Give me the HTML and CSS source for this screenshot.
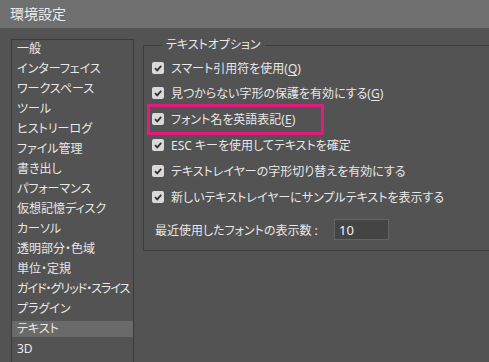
FILE: index.html
```html
<!DOCTYPE html>
<html lang="ja">
<head>
    <meta charset="UTF-8">
    <meta name="viewport" content="width=device-width, initial-scale=1.0">
    <title>環境設定</title>

    <link rel="stylesheet" href="styles.css">
</head>
<body>
    <header class="titulo">環境設定</header>

    <div class="contenido">
        <ul class="lista">
            <li>一般</li>
            <li>インターフェイス</li>
            <li>ワークスペース</li>
            <li>ツール</li>
            <li>ヒストリーログ</li>
            <li>ファイル管理</li>
            <li>書き出し</li>
            <li>パフォーマンス</li>
            <li>仮想記憶ディスク</li>
            <li>カーソル</li>
            <li>透明部分・色域</li>
            <li>単位・定規</li>
            <li class="apretado">ガイド・グリッド・スライス</li>
            <li>プラグイン</li>
            <li class="activo">テキスト</li>
            <li>3D</li>
        </ul>

        <fieldset class="opciones">
            <legend>テキストオプション</legend>

            <div class="fila primera">
                <span class="check"><svg viewBox="0 0 12 12"><polyline points="3,6.2 5.2,8.4 9.2,3.8"/></svg></span>
                <span>スマート引用符を使用(<u>Q</u>)</span>
            </div>
            <div class="fila">
                <span class="check"><svg viewBox="0 0 12 12"><polyline points="3,6.2 5.2,8.4 9.2,3.8"/></svg></span>
                <span>見つからない字形の保護を有効にする(<u>G</u>)</span>
            </div>
            <div class="fila marcada">
                <span class="check"><svg viewBox="0 0 12 12"><polyline points="3,6.2 5.2,8.4 9.2,3.8"/></svg></span>
                <span>フォント名を英語表記(<u>E</u>)</span>
                <span class="resalte"></span>
            </div>
            <div class="fila">
                <span class="check"><svg viewBox="0 0 12 12"><polyline points="3,6.2 5.2,8.4 9.2,3.8"/></svg></span>
                <span>ESC キーを使用してテキストを確定</span>
            </div>
            <div class="fila">
                <span class="check"><svg viewBox="0 0 12 12"><polyline points="3,6.2 5.2,8.4 9.2,3.8"/></svg></span>
                <span>テキストレイヤーの字形切り替えを有効にする</span>
            </div>
            <div class="fila">
                <span class="check"><svg viewBox="0 0 12 12"><polyline points="3,6.2 5.2,8.4 9.2,3.8"/></svg></span>
                <span>新しいテキストレイヤーにサンプルテキストを表示する</span>
            </div>

            <div class="recientes">
                <span class="etiqueta">最近使用したフォントの表示数 :</span>
                <input type="text" value="10">
            </div>
        </fieldset>
    </div>
</body>
</html>
```

FILE: styles.css
```css
body {
    margin: 0;
    font-family: "Noto Sans", "Noto Sans CJK JP", sans-serif;
    font-feature-settings: "palt";
    background-color: #535353;
    color: #e8e8e8;
    overflow: hidden;
    height: 362px;
}

.titulo {
    height: 28px;
    line-height: 28px;
    padding-left: 10px;
    background-color: #6f6f6f;
    color: #ececec;
    font-size: 14px;
}

.contenido {
    display: flex;
    align-items: flex-start;
    gap: 9px;
    padding-left: 11px;
}

.lista {
    list-style: none;
    margin: 11px 0 0 0;
    padding: 1px 0 0 0;
    width: 121px;
    height: 360px;
    border: 1px solid #3b3b3b;
    font-size: 12px;
}

.lista li {
    height: 16px;
    line-height: 16px;
    margin-bottom: 4px;
    padding-left: 5px;
    white-space: nowrap;
}

.lista li.apretado {
    letter-spacing: -1px;
}

.lista li.activo {
    background-color: #6a6a6a;
}

.opciones {
    flex: 1;
    margin: 8px -30px 0 0;
    padding: 0 0 10px 8px;
    border: 1px solid #3d3d3d;
    font-size: 12px;
    min-width: 0;
}

.opciones legend {
    margin-left: 10px;
    padding: 0 4px;
    line-height: 18px;
}

.fila {
    display: flex;
    align-items: center;
    gap: 7px;
    height: 26px;
    position: relative;
    white-space: nowrap;
}

.fila.primera {
    height: 24px;
    margin-top: 2px;
}

.check {
    width: 12px;
    height: 12px;
    border-radius: 2px;
    background-color: #d9d9d9;
    display: flex;
}

.check svg {
    width: 12px;
    height: 12px;
    fill: none;
    stroke: #333;
    stroke-width: 1.8;
}

.fila u {
    text-decoration-thickness: 1px;
    text-underline-offset: 2px;
}

.resalte {
    position: absolute;
    left: -5px;
    top: -2px;
    width: 171px;
    height: 25px;
    border: 3px solid #e6197c;
}

.recientes {
    display: flex;
    align-items: center;
    margin-top: 9px;
    padding-left: 3px;
    white-space: nowrap;
}

.recientes .etiqueta {
    width: 179px;
}

.recientes input {
    width: 45px;
    height: 19px;
    padding: 0 4px;
    border: 1px solid #646464;
    background-color: #444;
    color: #f2f2f2;
    font-family: "Noto Sans", sans-serif;
    font-size: 13px;
}
```
